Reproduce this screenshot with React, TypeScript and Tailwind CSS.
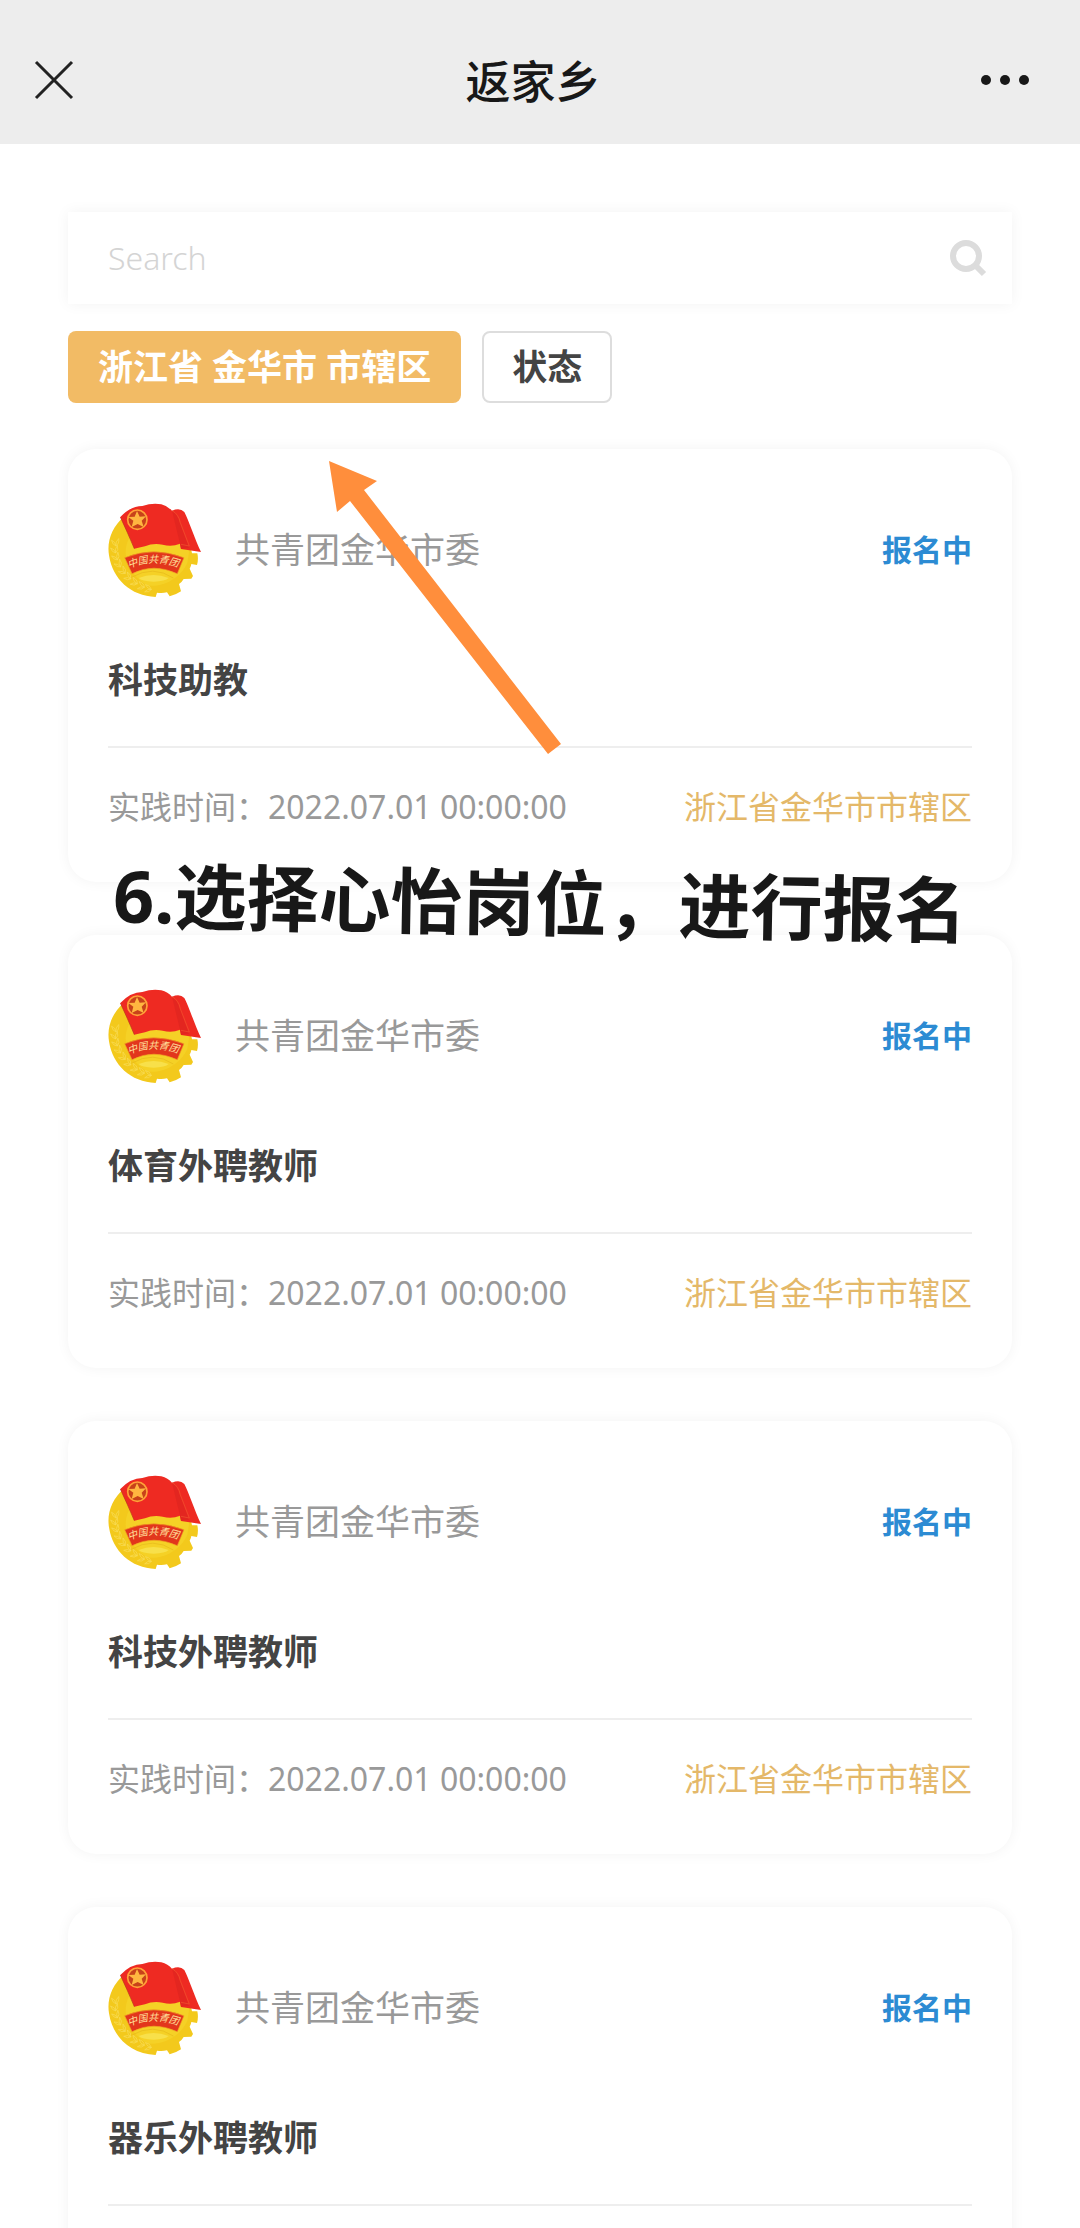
import { useId } from "react";

type Post = {
  id: number;
  org: string;
  status: string;
  title: string;
  time?: string;
  area?: string;
};

const posts: Post[] = [
  { id: 1, org: "共青团金华市委", status: "报名中", title: "科技助教", time: "2022.07.01 00:00:00", area: "浙江省金华市市辖区" },
  { id: 2, org: "共青团金华市委", status: "报名中", title: "体育外聘教师", time: "2022.07.01 00:00:00", area: "浙江省金华市市辖区" },
  { id: 3, org: "共青团金华市委", status: "报名中", title: "科技外聘教师", time: "2022.07.01 00:00:00", area: "浙江省金华市市辖区" },
  { id: 4, org: "共青团金华市委", status: "报名中", title: "器乐外聘教师" },
];

// 左下麦穗
const grains = [
  [74, 190, -10],
  [72, 212, -18],
  [76, 234, -28],
  [84, 256, -38],
  [97, 277, -48],
  [113, 295, -58],
  [132, 311, -66],
  [153, 323, -74],
  [174, 331, -82],
];

function Emblem() {
  const arcId = useId();

  return (
    <svg viewBox="54 68 282 288" className="h-24 w-[94px] shrink-0" role="img" aria-label="团徽">
      <path
        d="M102 112C66 142 50 186 57 228C68 300 122 350 197 353L201 340Q217 342 231 339L239 351Q257 347 273 336L267 314Q276 308 281 299L304 298L309 290L299 268Q303 262 304 254L321 257Q326 240 322 222L306 222L300 196Z"
        fill="#f3c91c"
      />
      <path d="M118 175C96 215 104 275 170 318C215 325 270 300 292 250L300 200Z" fill="#f5d126" />
      {grains.map(([x, y, angle]) => (
        <g key={y} transform={`translate(${x} ${y}) rotate(${angle})`} fill="none" stroke="#f8dc55" strokeWidth="2">
          <path d="M-8 -9Q-8 5 2 10Q3 -2 -8 -9" />
          <path d="M14 -10Q14 5 2 10Q2 -2 14 -10" />
        </g>
      ))}
      <path d="M146 296Q190 278 236 296Q226 306 191 307Q155 306 146 296Z" fill="#f8e04a" />
      <path d="M124 294Q190 256 250 296" fill="none" stroke="#e6b81a" strokeWidth="2" />

      {/* 团旗 */}
      <path
        d="M91 113Q122 80 157 80Q187 70 214 75Q234 80 246 94Q270 84 283 98C296 122 314 178 333 218L273 209L270 193Q246 203 218 196Q190 190 165 201Q148 205 133 208C120 175 105 145 91 113Z"
        fill="#ee2a22"
      />
      <path d="M246 94Q262 105 268 128L297 205L273 209L270 193Z" fill="#e32620" />
      <path d="M246 94Q266 104 271 130L298 200L273 195" fill="none" stroke="#f0562f" strokeWidth="2" />
      <path d="M91 113C105 145 120 175 133 208" fill="none" stroke="#b8321a" strokeWidth="2" />
      <circle cx="142" cy="121" r="29" fill="#c8421a" stroke="#ffa238" strokeWidth="5" />
      <path d="M141 95L149 112L168 111L155 124L161 143L143 134L125 143L130 124L115 113L134 112Z" fill="#ffb640" />

      {/* 绶带 */}
      <path d="M104 235Q190 200 282 235L262 283Q190 250 126 283Z" fill="#e2361c" stroke="#f0a524" strokeWidth="2" />
      <path id={arcId} d="M117 267Q190 234 276 268" fill="none" />
      <text fill="#ffdf9a" fontSize="30" className="font-['Noto_Sans_CJK_SC',sans-serif] italic">
        <textPath href={`#${arcId}`}>中国共青团</textPath>
      </text>
    </svg>
  );
}

function PostCard({ post }: { post: Post }) {
  return (
    <li className="rounded-[28px] bg-white px-10 pt-[53px] pb-[51px] shadow-[0_0_14px_rgba(0,0,0,0.05)]">
      <div className="flex items-center">
        <Emblem />
        <span className="ml-[33px] text-[35px] leading-[48px] text-[#999]">{post.org}</span>
        <span className="ml-auto text-[30px] leading-[48px] font-bold text-[#2c8bd3]">{post.status}</span>
      </div>
      <h2 className="mt-[58px] text-[35px] leading-[48px] font-bold text-[#444]">{post.title}</h2>
      <div className="mt-[42px] flex min-h-[85px] justify-between border-t-2 border-[#eee] pt-[35px] text-[32px] leading-[48px]">
        {post.time && <span className="text-[#999]">实践时间：{post.time}</span>}
        {post.area && <span className="text-[#e4b869]">{post.area}</span>}
      </div>
    </li>
  );
}

export default function App() {
  return (
    <div className="flex h-screen flex-col bg-white font-['Noto_Sans','Noto_Sans_CJK_SC',sans-serif]">
      <header className="flex h-36 shrink-0 items-center bg-[#ededed] pt-4 pr-[50px] pl-[34px]">
        <button type="button" aria-label="关闭">
          <svg viewBox="0 0 40 40" className="size-10" fill="none" stroke="#222" strokeWidth="3">
            <path d="M2 2L38 38M38 2L2 38" />
          </svg>
        </button>
        <h1 className="flex-1 pt-1 pl-3 text-center text-[45px] leading-[60px] font-medium text-[#181818]">返家乡</h1>
        <button type="button" aria-label="更多">
          <svg viewBox="0 0 50 40" className="h-10 w-[50px]" fill="#181818">
            <circle cx="6" cy="20" r="5" />
            <circle cx="25" cy="20" r="5" />
            <circle cx="44" cy="20" r="5" />
          </svg>
        </button>
      </header>

      <main className="min-h-0 flex-1 overflow-y-auto px-[68px] pt-[68px] [scrollbar-width:none]">
        <form className="flex h-[92px] items-center bg-white pr-6 pl-10 shadow-[0_0_14px_rgba(0,0,0,0.05)]">
          <input
            type="text"
            aria-label="Search"
            placeholder="Search"
            className="min-w-0 flex-1 text-[32px] font-light outline-none placeholder:text-[#d4d4d4]"
          />
          <button type="button" aria-label="搜索">
            <svg viewBox="0 0 40 40" className="size-10" fill="none" stroke="#dcdcdc" strokeWidth="6">
              <circle cx="18" cy="18" r="13" />
              <path d="M27 27L36 36" />
            </svg>
          </button>
        </form>

        <div className="mt-[27px] flex gap-[21px]">
          <button type="button" className="h-[72px] rounded-lg bg-[#f2bb65] px-[30px] text-[35px] font-bold text-white">
            浙江省 金华市 市辖区
          </button>
          <button type="button" className="h-[72px] rounded-lg border-2 border-[#ddd] px-7 text-[35px] font-bold text-[#444]">
            状态
          </button>
        </div>

        <div className="relative mt-[46px]">
          <ul className="flex flex-col gap-[53px]">
            {posts.map((post) => (
              <PostCard key={post.id} post={post} />
            ))}
          </ul>

          {/* 教程标注 */}
          <svg
            viewBox="0 0 234 294"
            className="pointer-events-none absolute top-3 left-[260px] h-[294px] w-[234px]"
            fill="#ff8e3c"
            aria-hidden="true"
          >
            <path d="M1 0L49 20L36 29L233 283L220 293L22 40L9 51Z" />
          </svg>
          <p className="pointer-events-none absolute inset-x-0 top-[405px] rotate-1 text-center text-[72px] leading-[96px] font-bold whitespace-nowrap text-[#181818]">
            6.选择心怡岗位，进行报名
          </p>
        </div>
      </main>
    </div>
  );
}
